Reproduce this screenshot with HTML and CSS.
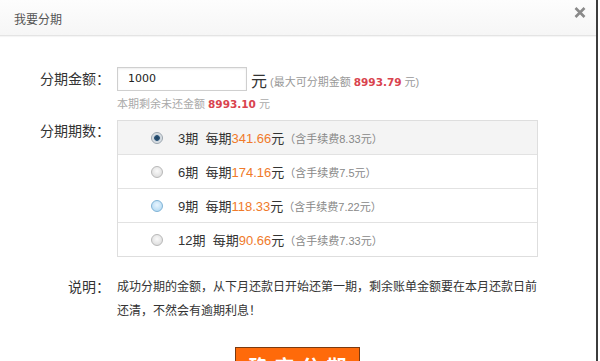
FILE: index.html
```html
<!DOCTYPE html>
<html lang="zh-CN">
<head>
<meta charset="utf-8">
<title>我要分期</title>
<link rel="stylesheet" href="styles.css">
</head>
<body>
<div class="dialog">
  <div class="header">
    <span class="title">我要分期</span>
    <svg class="close" width="12" height="11" viewBox="0 0 12 11"><path d="M1.5 1 L10.5 10 M10.5 1 L1.5 10" stroke="#8a8a8a" stroke-width="2.6" stroke-linecap="butt"/></svg>
  </div>
  <div class="content">
    <div class="row row-amount">
      <div class="label">分期金额：</div>
      <div class="field">
        <div class="amount-line">
          <div class="input">1000</div>
          <span class="yuan">元</span>
          <span class="note">(最大可分期金额 <b class="red">8993.79</b> 元)</span>
        </div>
        <div class="hint">本期剩余未还金额 <b class="red">8993.10</b> 元</div>
      </div>
    </div>
    <div class="row row-terms">
      <div class="label">分期期数：</div>
      <div class="options">
        <div class="option selected-row"><span class="radio checked"></span><span class="opt-text">3期&nbsp; 每期<em>341.66</em>元</span><span class="fee">（含手续费8.33元）</span></div>
        <div class="option"><span class="radio"></span><span class="opt-text">6期&nbsp; 每期<em>174.16</em>元</span><span class="fee">（含手续费7.5元）</span></div>
        <div class="option"><span class="radio hover"></span><span class="opt-text">9期&nbsp; 每期<em>118.33</em>元</span><span class="fee">（含手续费7.22元）</span></div>
        <div class="option"><span class="radio"></span><span class="opt-text">12期&nbsp; 每期<em>90.66</em>元</span><span class="fee">（含手续费7.33元）</span></div>
      </div>
    </div>
    <div class="row row-desc">
      <div class="label">说明：</div>
      <div class="desc">成功分期的金额，从下月还款日开始还第一期，剩余账单金额要在本月还款日前还清，不然会有逾期利息！</div>
    </div>
    <div class="actions">
      <div class="btn">确定分期</div>
    </div>
  </div>
</div>
</body>
</html>
```
FILE: styles.css
```css
html, body {
  margin: 0;
  padding: 0;
  background: #fff;
  overflow: hidden;
}
body {
  font-family: "Liberation Sans", "Noto Sans CJK SC", sans-serif;
  color: #333;
}
.dialog {
  width: 596px;
  height: 361px;
  border-right: 2px solid #3c3c3c;
  overflow: hidden;
}
.header {
  height: 35px;
  background: linear-gradient(#fdfdfd, #f6f6f6);
  border-bottom: 1px solid #e4e4e4;
  display: flex;
  align-items: center;
  justify-content: space-between;
  padding: 0 10px 0 14px;
  box-shadow: 0 1px 1px rgba(0,0,0,0.04);
}
.title {
  font-size: 12px;
  color: #555;
  margin-top: 1px;
}
.close {
  display: block;
  margin-top: -11px;
}
.content {
  padding-top: 31px;
}
.row {
  display: flex;
  align-items: flex-start;
}
.label {
  width: 110px;
  flex: none;
  text-align: right;
  font-size: 14px;
  color: #333;
  margin-right: 7px;
}
.row-amount .label {
  line-height: 24px;
}
.amount-line {
  display: flex;
  align-items: flex-end;
}
.input {
  width: 118px;
  height: 22px;
  border: 1px solid #cfcfcf;
  box-shadow: inset 0 1px 2px rgba(0,0,0,0.08);
  padding-left: 10px;
  line-height: 22px;
  color: #222;
  font-family: "DejaVu Sans", sans-serif;
  font-size: 11px;
}
.yuan {
  font-size: 16px;
  line-height: 16px;
  color: #333;
  margin-left: 4px;
  margin-bottom: 1px;
}
.note {
  font-size: 11px;
  color: #999;
  margin-left: 3px;
  margin-bottom: 2px;
  line-height: 14px;
}
.red {
  color: #d9434e;
  font-weight: bold;
  font-family: "DejaVu Sans", sans-serif;
  font-size: 10.5px;
}
.hint {
  margin-top: 5px;
  font-size: 11px;
  line-height: 16px;
  color: #aaa;
}
.row-terms {
  margin-top: 8px;
}
.row-terms .label {
  line-height: 22px;
}
.options {
  width: 419px;
  border: 1px solid #dedede;
}
.option {
  height: 33px;
  display: flex;
  align-items: center;
  border-top: 1px solid #e2e2e2;
  font-size: 13px;
}
.option:first-child {
  border-top: none;
}
.selected-row {
  background: #f4f4f4;
}
.radio {
  width: 10px;
  height: 10px;
  border-radius: 50%;
  border: 1px solid #b8b8b8;
  background: radial-gradient(circle at 50% 40%, #fafafa, #d6d6d6);
  margin-left: 33px;
  margin-right: 15px;
  box-sizing: content-box;
  flex: none;
}
.radio.checked {
  border-color: #9aa4ad;
  background: radial-gradient(circle, #1f3f5c 0, #2b5478 2.5px, #c9d2da 3.2px, #eef0f2 6px);
}
.radio.hover {
  border-color: #7fb3d6;
  background: radial-gradient(circle at 50% 40%, #e8f5ff, #a9d4f0);
}
.opt-text {
  color: #333;
}
.opt-text em {
  font-style: normal;
  color: #f07a2a;
}
.fee {
  font-size: 11px;
  color: #888;
}
.row-desc {
  margin-top: 18px;
}
.row-desc .label {
  line-height: 24px;
}
.desc {
  width: 420px;
  font-size: 12px;
  line-height: 24px;
  color: #333;
}
.actions {
  display: flex;
  padding-left: 235px;
  margin-top: 24px;
}
.btn {
  width: 123px;
  height: 40px;
  background: #ff6a0a;
  border: 1px solid #7a3a10;
  color: #fff;
  font-size: 20px;
  font-weight: bold;
  letter-spacing: 6px;
  text-align: center;
  line-height: 40px;
  text-indent: 6px;
  white-space: nowrap;
}
```
